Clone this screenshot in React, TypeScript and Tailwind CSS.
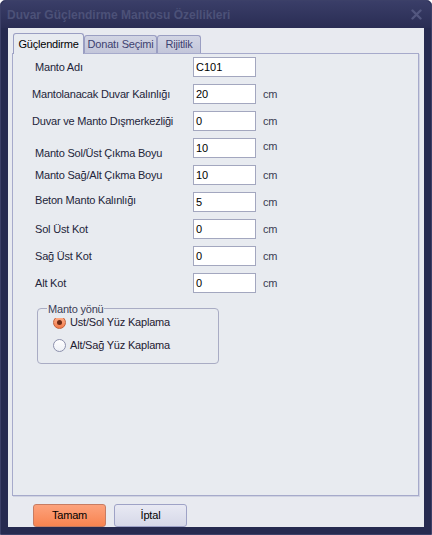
import React from 'react';

type Row = {
  label: string;
  value: string;
  unit?: boolean;
  labelCls: string;
  unitCls?: string;
};

const rows: Row[] = [
  { label: 'Manto Adı', value: 'C101', labelCls: 'pl-[22px]' },
  { label: 'Mantolanacak Duvar Kalınlığı', value: '20', unit: true, labelCls: 'pl-[19px]' },
  { label: 'Duvar ve Manto Dışmerkezliği', value: '0', unit: true, labelCls: 'pl-[19px]' },
  { label: 'Manto Sol/Üst Çıkma Boyu', value: '10', unit: true, labelCls: 'pl-[22px] translate-y-[5px]', unitCls: '-translate-y-[2px]' },
  { label: 'Manto Sağ/Alt Çıkma Boyu', value: '10', unit: true, labelCls: 'pl-[22px]' },
  { label: 'Beton Manto Kalınlığı', value: '5', unit: true, labelCls: 'pl-[22px] -translate-y-[2px]' },
  { label: 'Sol Üst Kot', value: '0', unit: true, labelCls: 'pl-[22px]' },
  { label: 'Sağ Üst Kot', value: '0', unit: true, labelCls: 'pl-[22px]' },
  { label: 'Alt Kot', value: '0', unit: true, labelCls: 'pl-[22px]' },
];

function Radio({ checked, label }: { checked?: boolean; label: string }) {
  return (
    <div className="flex items-center h-[23px]">
      {checked ? (
        <div className="w-[13px] h-[13px] rounded-full border border-[#c0603a] bg-gradient-to-b from-[#fdb08c] to-[#f27a48] flex items-center justify-center">
          <div className="w-[5px] h-[5px] rounded-full bg-[#6e2a14]" />
        </div>
      ) : (
        <div className="w-[13px] h-[13px] rounded-full border border-[#8c90ac] bg-gradient-to-b from-[#ffffff] to-[#eef0f6]" />
      )}
      <span className="ml-[4px] text-[#1e2030]">{label}</span>
    </div>
  );
}

export default function App() {
  return (
    <div
      className="w-[432px] h-[535px] bg-[#262a50] border border-[#3c4068] rounded-t-[5px] flex flex-col text-[11px] tracking-[-0.2px] text-[#23253a]"
      style={{ fontFamily: '"Liberation Sans", Arial, sans-serif' }}
    >
      {/* title bar */}
      <div className="h-[27px] shrink-0 flex items-center justify-between pl-[6px] pr-[9px] bg-gradient-to-b from-[#3a3e68] to-[#2a2d54] rounded-t-[5px]">
        <span className="text-[12px] font-bold text-[#4c5178] tracking-normal">Duvar Güçlendirme Mantosu Özellikleri</span>
        <svg width="11" height="11" viewBox="0 0 11 11">
          <path d="M1.5 1.5 L9.5 9.5 M9.5 1.5 L1.5 9.5" stroke="#53577f" strokeWidth="2.4" strokeLinecap="round" />
        </svg>
      </div>

      {/* client area */}
      <div className="mx-[7px] mb-[7px] flex-1 bg-[#e8eaf0] flex flex-col pl-[4px] pr-[5px] pt-[5px]">
        {/* tabs */}
        <div className="h-[20px] flex items-end relative z-10">
          <div className="ml-[1px] w-[71px] h-[21px] -mb-[1px] bg-[#e8ebf0] border border-b-0 border-[#9a9ec2] rounded-t-[3px] flex items-center justify-center text-black">
            Güçlendirme
          </div>
          <div className="w-[73px] h-[18px] bg-gradient-to-b from-[#d2d5e4] to-[#c3c6da] border border-b-0 border-[#9a9ec2] rounded-t-[3px] flex items-center justify-center text-[#3e4270]">
            Donatı Seçimi
          </div>
          <div className="w-[44px] h-[18px] bg-gradient-to-b from-[#d2d5e4] to-[#c3c6da] border border-b-0 border-[#9a9ec2] rounded-t-[3px] flex items-center justify-center text-[#3e4270]">
            Rijitlik
          </div>
        </div>

        {/* tab page */}
        <div className="h-[443px] border border-[#a6aacb] bg-[#e8ebf0] pt-[3px] shadow-[1px_1px_0_#d0d3e2]">
          {rows.map((r) => (
            <div key={r.label} className="h-[27px] flex items-start">
              <div className={`w-[180px] h-[20px] flex items-center ${r.labelCls}`}>{r.label}</div>
              <div className="w-[63px] h-[20px] border border-[#a3a7bf] bg-white px-[2px] flex items-center text-black tracking-normal">
                {r.value}
              </div>
              {r.unit && (
                <div className={`ml-[7px] h-[20px] flex items-center text-[#3a3c52] ${r.unitCls ?? ''}`}>cm</div>
              )}
            </div>
          ))}

          {/* Manto yönü group */}
          <div className="ml-[24px] mt-[8px] w-[182px] h-[56px] relative border border-[#a9acc4] rounded-[4px] pl-[15px] pt-[2px]">
            <span className="absolute -top-[8px] left-[9px] bg-[#e8ebf0] px-[1px] text-[#3a3c55]">Manto yönü</span>
            <Radio checked label="Üst/Sol Yüz Kaplama" />
            <Radio label="Alt/Sağ Yüz Kaplama" />
          </div>
        </div>

        {/* buttons */}
        <div className="mt-[8px] pl-[21px] flex gap-[8px]">
          <div className="w-[73px] h-[23px] rounded-[3px] border border-[#c77c62] bg-gradient-to-b from-[#fca27c] to-[#f8834f] flex items-center justify-center text-black">
            Tamam
          </div>
          <div className="w-[73px] h-[23px] rounded-[3px] border border-[#9ea2c6] bg-gradient-to-b from-[#e8e9f3] to-[#d6d8e8] flex items-center justify-center text-black">
            İptal
          </div>
        </div>
      </div>
    </div>
  );
}
